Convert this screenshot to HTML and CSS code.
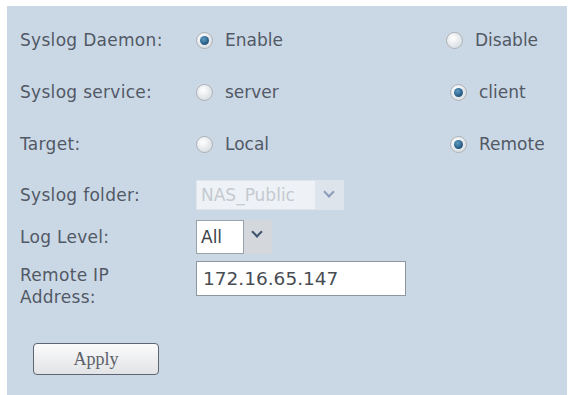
FILE: index.html
```html
<!DOCTYPE html>
<html lang="en">
  <head>
    <meta charset="UTF-8" />
    <title>Syslog</title>
    <link rel="stylesheet" href="styles.css">
  </head>
  <body>
    <div class="panel">
      <div class="row opt-row">
        <div class="label">Syslog Daemon:</div>
        <label class="opt"><span class="radio checked"></span>Enable</label>
        <label class="opt opt-right"><span class="radio"></span>Disable</label>
      </div>
      <div class="row opt-row">
        <div class="label">Syslog service:</div>
        <label class="opt"><span class="radio"></span>server</label>
        <label class="opt opt-right shift"><span class="radio checked"></span>client</label>
      </div>
      <div class="row opt-row">
        <div class="label">Target:</div>
        <label class="opt"><span class="radio"></span>Local</label>
        <label class="opt opt-right shift"><span class="radio checked"></span>Remote</label>
      </div>

      <div class="row folder-row">
        <div class="label">Syslog folder:</div>
        <div class="select disabled">
          <span class="select-value folder-value">NAS_Public</span>
          <span class="select-arrow"></span>
        </div>
      </div>
      <div class="row level-row">
        <div class="label">Log Level:</div>
        <div class="select">
          <span class="select-value level-value">All</span>
          <span class="select-arrow"></span>
        </div>
      </div>
      <div class="row ip-row">
        <div class="label">Remote IP<br>Address:</div>
        <div class="text-input">172.16.65.147</div>
      </div>

      <button class="apply-btn" type="button">Apply</button>
    </div>
  </body>
</html>
```

FILE: styles.css
```css
body {
  margin: 0;
  background-color: #FFFFFF;
  font-family: "DejaVu Sans", Verdana, sans-serif;
  font-size: 17px;
  color: #525965;
}

.panel {
  margin: 6px 4px 0 7px;
  height: 389px;
  padding: 8px 0 0 13px;
  box-sizing: border-box;
  background-color: #cad8e6;
}

.row {
  display: flex;
  align-items: center;
}

.label {
  width: 176px;
  flex-shrink: 0;
  line-height: 22px;
  letter-spacing: 0.3px;
}

.opt-row {
  height: 52px;
}

.opt {
  display: flex;
  align-items: center;
  width: 250px;
  flex-shrink: 0;
}

.opt-right {
  width: auto;
}

.opt-right.shift {
  margin-left: 4px;
}

.radio {
  width: 15px;
  height: 15px;
  border-radius: 50%;
  border: 1px solid #a9b0b8;
  background: radial-gradient(circle at 40% 35%, #ffffff, #dde2e6 70%);
  margin-right: 12px;
  position: relative;
  box-shadow: 0 0 1px #e8d9d0;
}

.radio.checked::after {
  content: "";
  position: absolute;
  left: 3px;
  top: 3px;
  width: 9px;
  height: 9px;
  border-radius: 50%;
  background: radial-gradient(circle at 40% 35%, #5d9dc4, #1d4f78 75%);
}

.folder-row {
  margin-top: 10px;
  height: 30px;
}

.level-row {
  margin-top: 10px;
  height: 34px;
}

.ip-row {
  margin-top: 7px;
  align-items: flex-start;
}

.ip-row .label {
  margin-top: 3px;
}

.select {
  display: flex;
  height: 100%;
}

.select-value {
  display: flex;
  align-items: center;
  padding-left: 4px;
  box-sizing: border-box;
  border: 1px solid #9aa3ab;
  background-color: #FFFFFF;
  color: #3d4249;
}

.folder-value {
  width: 120px;
  color: #c4cad0;
  border-color: #dfe5ea;
  background-color: #eef2f6;
}

.level-value {
  width: 48px;
}

.select-arrow {
  width: 28px;
  background-color: #d4d8dc;
  position: relative;
}

.disabled .select-arrow {
  background-color: #dde4ec;
}

.select-arrow::after {
  content: "";
  position: absolute;
  left: 9px;
  top: 8px;
  width: 6px;
  height: 6px;
  border-right: 2px solid #3f5470;
  border-bottom: 2px solid #3f5470;
  transform: rotate(45deg);
}

.disabled .select-arrow::after {
  border-color: #8c9bb8;
}

.text-input {
  width: 210px;
  height: 35px;
  box-sizing: border-box;
  border: 1px solid #8e979f;
  background-color: #FFFFFF;
  padding: 0 6px;
  display: flex;
  align-items: center;
  font-size: 18.5px;
  color: #484d54;
}

.apply-btn {
  margin: 35px 0 0 13px;
  width: 126px;
  height: 32px;
  border: 1px solid #5d6570;
  border-radius: 4px;
  background: linear-gradient(#fbfbfc, #e2e3e6);
  font-family: "Liberation Serif", "Times New Roman", serif;
  font-size: 18px;
  color: #5b6068;
}
```
